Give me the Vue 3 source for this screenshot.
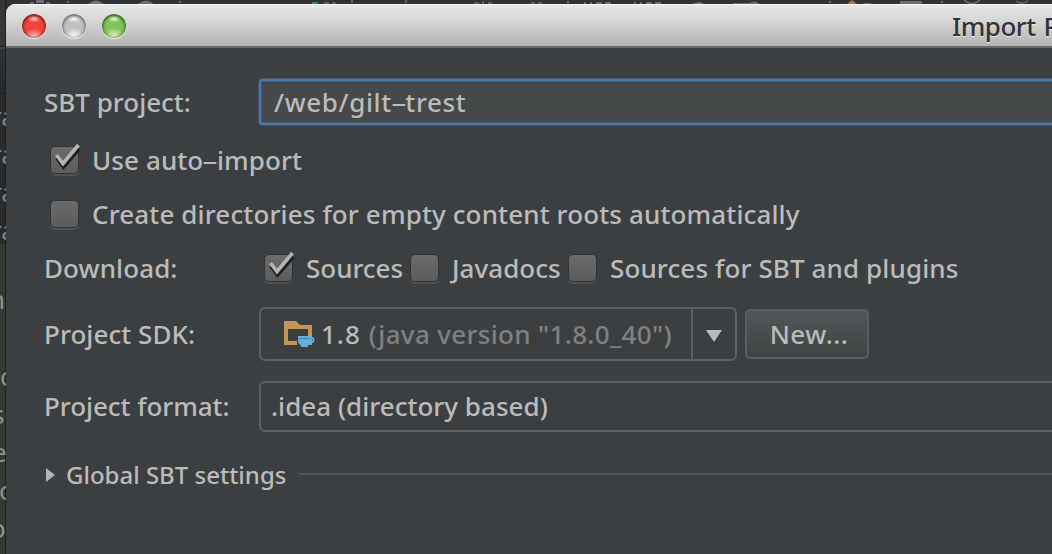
<script setup>
const lines = [
  { t: 'ra', y: 99, k: 'dim' }, { t: 'ra', y: 137, k: 'dim' }, { t: 'ra', y: 175, k: 'dim' }, { t: 'ra', y: 213, k: 'dim' },
  { t: 'n', y: 282, k: 'n' }, { t: 'o', y: 359, k: 'o' }, { t: 'se', y: 397, k: 's' }, { t: 'e', y: 435, k: 's' }, { t: 'c', y: 473, k: 'c' }, { t: 'o', y: 511, k: 'p' }
]
</script>

<template>
  <div class="screen">
    <svg class="toolbar" width="1052" height="4" viewBox="0 0 1052 4" aria-hidden="true">
      <g fill="#6c6e70">
        <path d="M30 2h4v2h-4zM36 0h8v3h-8zM46 2h4v2h-4zM67 1h2v2h-2zM179 1h2v2h-2zM567 1h2v2h-2zM829 1h2v2h-2zM941 1h2v2h-2z" />
        <path d="M88 4q8-7 16 0zM138 4q8-7 16 0zM692 4q8-4 12 0zM900 1h22v3h-22zM733 3h17v1h-17zM863 3h8v1h-8zM748 4q6-5 12 0z" />
        <path d="M324 2h5v2h-5zM332 2h4v2h-4zM351 0h2v3h-2zM405 0h2v3h-2zM474 2h5v2h-5zM482 1h2v3h-2zM488 2h4v2h-4zM531 2h4v2h-4zM538 2h4v2h-4z" opacity=".8" />
        <path d="M584 2h2v2h-2zM590 2h2v2h-2zM596 2h6v2h-6zM605 2h6v2h-6zM634 2h2v2h-2zM640 2h2v2h-2zM646 2h6v2h-6zM655 2h6v2h-6z" />
      </g>
      <path d="M964 0q8 7 16 0M1016 1q6 4 12 0" fill="none" stroke="#6c6e70" stroke-width="1.5" />
      <path d="M312 2h6v2h-6z" fill="#2b9a3e" />
      <path d="M847 4l5-4 5 4z" fill="#b5713a" />
    </svg>
    <div class="editor">
      <span v-for="(l, i) in lines" :key="i" :class="['code', l.k]" :style="{ top: l.y + 'px' }">{{ l.t }}</span>
    </div>
    <main class="dialog">
      <header class="titlebar">
        <i class="light red"></i><i class="light gray"></i><i class="light green"></i>
        <span class="title">Import Project</span>
      </header>
      <section class="form">
        <div class="row project">
          <label class="sbt">SBT project:</label>
          <div class="field"><span>/web/gilt<b class="hy">-</b>trest</span></div>
        </div>
        <div class="row auto">
          <i class="box"><svg class="tick" viewBox="0 0 30 32"><use href="#check" /></svg></i>
          <span class="use">Use auto<b class="hy">-</b>import</span>
        </div>
        <div class="row create">
          <i class="box"></i>
          <span class="dirs">Create directories for empty content roots automatically</span>
        </div>
        <div class="row download">
          <label class="down">Download:</label>
          <i class="box"><svg class="tick" viewBox="0 0 30 32"><use href="#check" /></svg></i>
          <span class="sources">Sources</span>
          <i class="box"></i>
          <span class="javadocs">Javadocs</span>
          <i class="box"></i>
          <span class="plugins">Sources for SBT and plugins</span>
        </div>
        <div class="row sdk">
          <label class="sdk-label">Project SDK:</label>
          <div class="combo">
            <svg class="folder" width="31" height="28" viewBox="0 0 31 28">
              <path fill="#c09659" fill-rule="evenodd" d="M0 0h12l4 4h12v20H0zM4 8v12h20V8z" />
              <path fill="#3c3f41" d="M13 14h11v6h-11zM13 20h3v4h-3z" />
              <path fill="#66b0dc" d="M14 15h13v1h1q2.500 0 2.500 3t-3 3h-1q-1 2-2.500 2.500V26h-7v-1.500Q14 22.500 14 19zM27 18v2.500h.8q.8 0 .8-1.300t-.8-1.200z" />
              <path fill="#3e87ad" d="M14.500 17h12v1h-12z" />
            </svg>
            <span class="ver">1.8</span>
            <span class="java">(java version "1.8.0_40")</span>
            <div class="arrow"><svg width="16" height="12" viewBox="0 0 16 12"><path fill="#bbb" d="M0 0h16L8 12z" /></svg></div>
          </div>
          <button class="new">New...</button>
        </div>
        <div class="row format">
          <label class="fmt-label">Project format:</label>
          <div class="select"><span>.idea (directory based)</span></div>
        </div>
        <div class="row global">
          <svg width="9" height="14" viewBox="0 0 9 14"><path fill="#b4b4b4" d="M0 0l9 7-9 7z" /></svg>
          <span class="settings">Global SBT settings</span>
          <i class="rule"></i>
        </div>
      </section>
    </main>
    <svg width="0" height="0" class="defs">
      <defs>
        <g id="check" fill="none">
          <path d="M7 15l6.500 9L29 6" stroke="#1f1f1f" stroke-width="3.800" />
          <path d="M6.500 12l6.500 8.500L28.500 2" stroke="#b4b4b4" stroke-width="3.600" />
        </g>
      </defs>
    </svg>
  </div>
</template>

<style>
html, body { margin: 0; background: #2b2b2b; overflow: hidden; }
</style>

<style scoped>
* { box-sizing: border-box; }
.screen { position: relative; width: 1052px; height: 554px; overflow: hidden; display: flex; background: #303335; font: 500 26px/34px "Noto Sans", "Open Sans", sans-serif; color: #bbb; white-space: pre; }
.toolbar { position: absolute; left: 0; top: 0; }
.defs { position: absolute; }
.editor { position: relative; width: 6px; flex: none; overflow: hidden; background: linear-gradient(#35383a 0 46px, #1f2021 46px 47px, #45484a 47px 49px, #303234 49px, #27292a 93px, #191a1a 93px 94px, #2b2b2b 94px 244px, #323b32 244px); box-shadow: inset -1px 0 #1d1e1e; }
.code { position: absolute; font: 26px/34px "Noto Sans", sans-serif; color: #8f918f; left: -8px; }
.code.dim { left: -9px; color: #808486; }
.code.n { left: -11px; }
.code.o { left: 0; }
.code.c { left: -1px; }
.code.p { left: -10px; }
.dialog { width: 1046px; height: 550px; margin-top: 4px; flex: none; background: #3c3f41; border-radius: 9px 0 0 0; overflow: hidden; }
.titlebar { height: 44px; display: flex; align-items: center; gap: 16px; padding-left: 16px; background: linear-gradient(#e9e9e9, #d6d6d6 40%, #b3b3b3); border-bottom: 2px solid #686868; box-shadow: inset 0 1px #f8f8f8; }
.light { width: 24px; height: 24px; margin-top: 2px; border-radius: 50%; flex: none; }
.red { background: radial-gradient(ellipse 7px 4px at 50% 19%, #ffd0cc, transparent), radial-gradient(ellipse 10px 8px at 50% 95%, #ffc9bd, transparent), #f0443f; box-shadow: inset 0 1px 3px 1px #7c1513, 0 1px 1px #eee; }
.gray { background: radial-gradient(ellipse 8px 4px at 50% 19%, #fff, transparent), radial-gradient(ellipse 11px 9px at 50% 95%, #fff, transparent), #c1c1c1; box-shadow: inset 0 1px 3px 1px #6a6a6a, 0 1px 1px #eee; }
.green { background: radial-gradient(ellipse 7px 4px at 50% 19%, #ecffdf, transparent), radial-gradient(ellipse 11px 9px at 50% 95%, #ecf8c8, transparent), #81c35d; box-shadow: inset 0 1px 3px 1px #2c5f1c, 0 1px 1px #eee; }
.title { margin-left: 810px; margin-top: 2px; color: #333; font-weight: 500; letter-spacing: -.5px; word-spacing: 1.5px; text-shadow: 0 1px #e8e8e8; flex: none; }
.form { display: flex; flex-direction: column; padding-left: 38px; }
.row { display: flex; align-items: center; flex: none; }
.row > * { flex: none; }
.project { height: 48px; margin-top: 30px; }
.auto { height: 34px; margin-top: 17px; padding-left: 6px; }
.create { height: 34px; margin-top: 20px; padding-left: 6px; }
.download { height: 34px; margin-top: 20px; }
.sdk { height: 56px; margin-top: 21px; }
.format { height: 50px; margin-top: 19px; }
.global { height: 34px; margin-top: 27px; padding-left: 2px; }
.sbt { letter-spacing: 0; width: 214px; }
.field { width: 810px; height: 46px; display: flex; align-items: center; padding-left: 13px; background: #45494a; border: 2px solid #4b79ad; border-radius: 4px; box-shadow: 0 0 0 1px #41546a, inset 0 0 0 1px #46586a; letter-spacing: .62px; margin-left: 1px; }
.hy { display: inline-block; width: 13.6px; font-weight: 400; letter-spacing: 0; text-align: center; transform: scaleX(2); }
.box { position: relative; width: 29px; height: 28px; border-radius: 5px; background: linear-gradient(#6b6b6b, #5c5c5c); border: 1px solid #313335; box-shadow: 0 2px #505355; }
.tick { position: absolute; left: -1px; top: -4px; width: 30px; height: 32px; }
.use { margin-left: 13px; letter-spacing: .1px; }
.dirs { margin-left: 13px; letter-spacing: .13px; }
.down { letter-spacing: .1px; width: 220px; }
.sources { margin-left: 13px; width: 104px; letter-spacing: -.03px; }
.javadocs { margin-left: 13px; width: 116px; letter-spacing: .05px; }
.plugins { margin-left: 13px; letter-spacing: .12px; }
.sdk-label { letter-spacing: .05px; width: 215px; }
.combo { width: 478px; height: 54px; display: flex; align-items: center; border: 2px solid #5e6060; border-radius: 6px; padding-left: 23px; }
.folder { margin-top: 1px; }
.ver { margin-left: 6px; letter-spacing: 1px; }
.java { margin-left: 8px; letter-spacing: .33px; color: #808080; }
.arrow { margin-left: auto; width: 44px; height: 50px; border-left: 2px solid #5e6060; display: flex; align-items: center; justify-content: center; padding-top: 3px; }
.new { width: 124px; height: 50px; margin-left: 8px; padding: 0 0 0 4px; border: 2px solid #5b5e5f; border-radius: 5px; background: linear-gradient(#515658, #3f4445); color: #bbb; font: inherit; letter-spacing: .5px; }
.fmt-label { width: 215px; letter-spacing: -.06px; }
.select { width: 830px; height: 51px; display: flex; align-items: center; padding-left: 10px; border: 2px solid #5e6060; border-radius: 6px; letter-spacing: .02px; }
.settings { margin-left: 11px; width: 233px; font-size: 24px; letter-spacing: 0; }
.rule { width: 760px; height: 2px; margin-top: -2px; background: #515354; }
</style>
